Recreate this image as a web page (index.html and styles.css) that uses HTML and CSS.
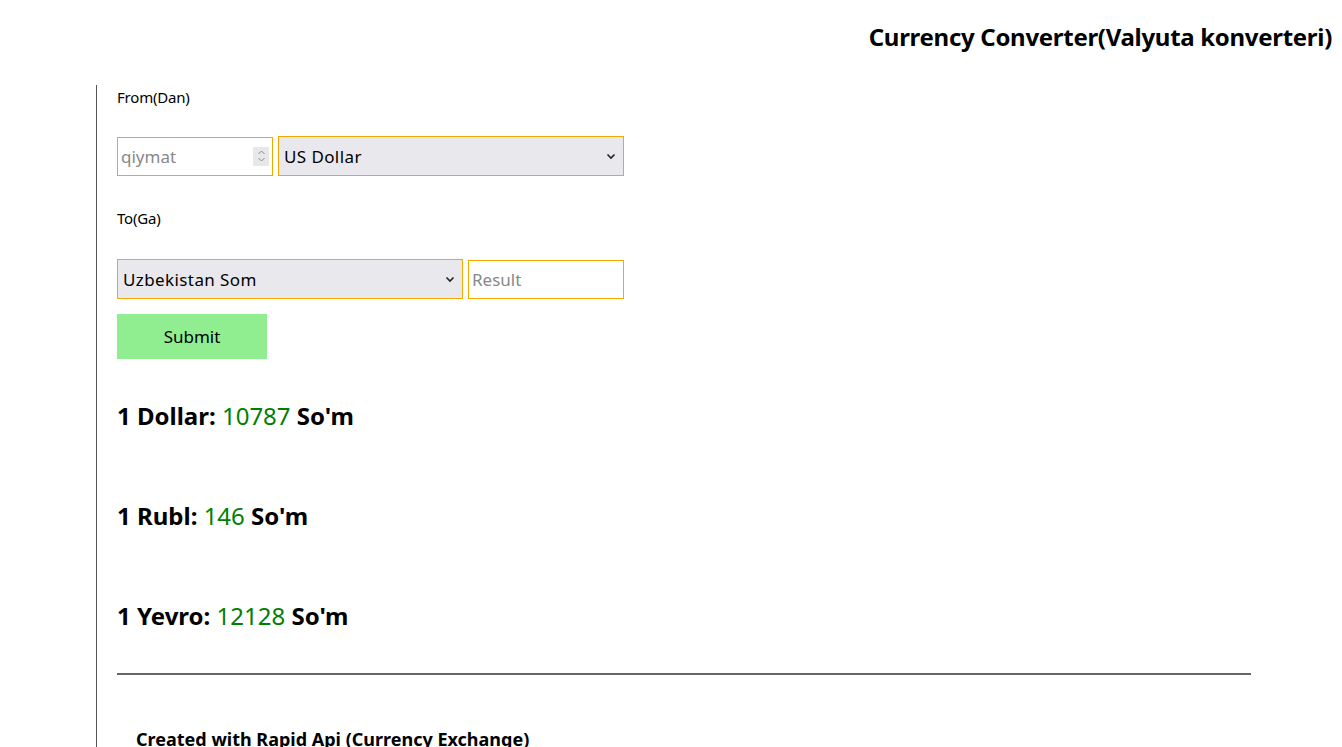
FILE: index.html
```html
<!DOCTYPE html>
<html>
<head>
<meta charset="utf-8">
<title>Currency Converter</title>
<link rel="stylesheet" href="styles.css">
</head>
<body>
<header class="top">
  <h1 class="title">Currency Converter(Valyuta konverteri)</h1>
</header>
<main class="panel">
  <form class="converter">
    <label class="lbl lbl-from">From(Dan)</label>
    <div class="row row-from">
      <div class="num">
        <input class="field num-field" type="text" placeholder="qiymat">
        <span class="spin">
          <svg width="9" height="14" viewBox="0 0 9 14"><path d="M1.5 5 L4.5 2 L7.5 5" fill="none" stroke="#8a8a8a" stroke-width="1"/><path d="M1.5 9 L4.5 12 L7.5 9" fill="none" stroke="#8a8a8a" stroke-width="1"/></svg>
        </span>
      </div>
      <div class="sel sel-from">
        <span>US Dollar</span>
        <svg class="chev" width="10" height="7" viewBox="0 0 10 7"><path d="M1.5 1.5 L5 5 L8.5 1.5" fill="none" stroke="#222" stroke-width="1.6"/></svg>
      </div>
    </div>
    <label class="lbl lbl-to">To(Ga)</label>
    <div class="row row-to">
      <div class="sel sel-to">
        <span>Uzbekistan Som</span>
        <svg class="chev" width="10" height="7" viewBox="0 0 10 7"><path d="M1.5 1.5 L5 5 L8.5 1.5" fill="none" stroke="#222" stroke-width="1.6"/></svg>
      </div>
      <input class="field res-field" type="text" placeholder="Result">
    </div>
    <button class="submit" type="button">Submit</button>
  </form>
  <section class="rates">
    <h2 class="rate">1 Dollar: <span class="val">10787</span> So'm</h2>
    <h2 class="rate">1 Rubl: <span class="val">146</span> So'm</h2>
    <h2 class="rate">1 Yevro: <span class="val">12128</span> So'm</h2>
  </section>
  <hr class="rule">
  <footer class="foot">Created with Rapid Api (Currency Exchange)</footer>
</main>
</body>
</html>
```
FILE: styles.css
```css
* { box-sizing: border-box; }
html, body { margin: 0; padding: 0; background: #fff; }
body {
  font-family: "Noto Sans", "Open Sans", sans-serif;
  color: #000;
  height: 747px;
  overflow: hidden;
}
.top {
  display: flex;
  justify-content: flex-end;
  padding: 20px 10px 0 0;
  height: 85px;
}
.title {
  margin: 0;
  font-size: 24px;
  font-weight: 700;
  line-height: 34px;
  letter-spacing: -0.3px;
}
.panel {
  margin-left: 96px;
  border-left: 1px solid #555;
  padding-left: 20px;
  width: 1155px;
  min-height: 700px;
}
.converter {
  display: flex;
  flex-direction: column;
  align-items: flex-start;
}
.lbl {
  font-size: 15px;
  line-height: 20px;
  letter-spacing: -0.2px;
}
.lbl-from { margin-top: 2px; height: 49px; }
.lbl-to { margin-top: 32px; height: 51px; }
.row {
  display: flex;
  gap: 5px;
  align-items: center;
  height: 40px;
}
.num { position: relative; width: 156px; height: 39px; }
.field {
  font-family: "Noto Sans", sans-serif;
  font-size: 17px;
  border: 1px solid #f5a800;
  background: #fff;
  height: 39px;
  padding: 0 3px;
  outline: none;
  border-radius: 0;
}
.field::placeholder { color: #888; }
.num-field { width: 156px; }
.spin {
  position: absolute;
  right: 4px;
  top: 10px;
  width: 16px;
  height: 19px;
  background: #e8e8ea;
  display: flex;
  align-items: center;
  justify-content: center;
}
.sel {
  display: flex;
  align-items: center;
  justify-content: space-between;
  background: #e9e9ed;
  border: 1px solid #f5a800;
  height: 40px;
  padding: 0 7px 0 5px;
  font-size: 17px;
  letter-spacing: 0.4px;
}
.sel-from { width: 346px; }
.sel-to { width: 346px; }
.res-field { width: 156px; }
.submit {
  margin-top: 15px;
  width: 150px;
  height: 45px;
  border: none;
  background: #90ee90;
  font-family: "Noto Sans", sans-serif;
  font-size: 17px;
  color: #000;
}
.rates { margin-top: 40px; }
.rate {
  margin: 0 0 67px;
  font-size: 24px;
  line-height: 33px;
  font-weight: 700;
}
.rate:last-child { margin-bottom: 0; }
.val { font-weight: 400; color: #008000; }
.rule {
  margin: 41px 0 0;
  width: 1134px;
  border: none;
  border-top: 2px solid #666;
  height: 0;
}
.foot {
  margin-top: 52px;
  padding-left: 19px;
  font-size: 18px;
  font-weight: 700;
}
```
